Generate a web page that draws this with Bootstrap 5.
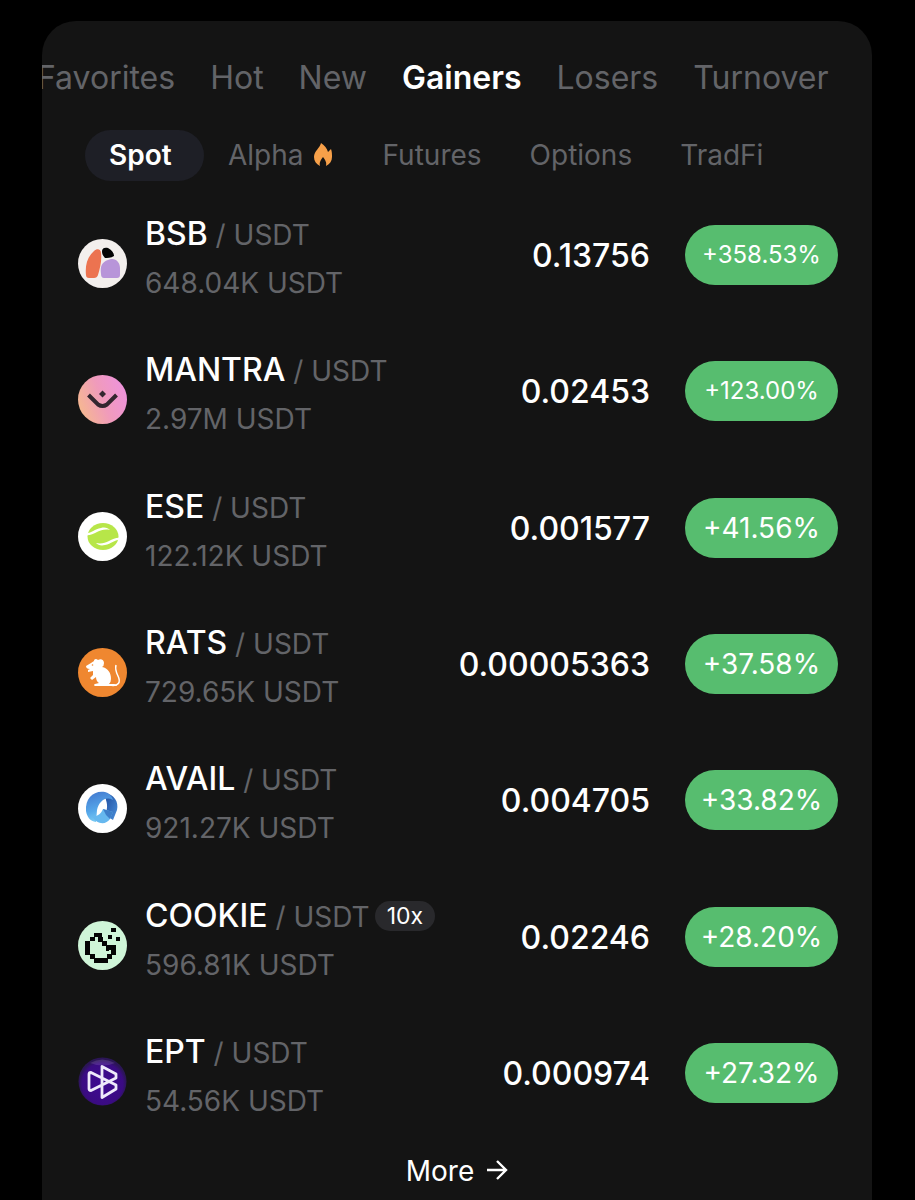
<!DOCTYPE html>
<html lang="en" data-bs-theme="dark">
<head>
<meta charset="utf-8">
<meta name="viewport" content="width=device-width, initial-scale=1">
<title>Markets – Gainers</title>
<link href="https://cdn.jsdelivr.net/npm/bootstrap@5.3.0/dist/css/bootstrap.min.css" rel="stylesheet">
<style>
  body { background: #000; color: #fff; font-family: Inter, "Liberation Sans", sans-serif; overflow-x: hidden; }
  .page { padding: 21px 43px 0 42px; }
  .panel { background: #141414; border-radius: 34px 34px 0 0; min-height: calc(100vh - 21px); overflow: hidden; }
  .market-tabs { gap: 35px; padding-top: 33px; margin-left: -5px; font-size: 32px; line-height: 48px; }
  .market-tabs button, .kind-tabs button { background: none; border: 0; padding: 0; color: #636468; font-weight: 400; white-space: nowrap; }
  .market-tabs button.active { color: #fff; font-weight: 600; }
  .kind-tabs { margin: 28px 0 0 43px; font-size: 28px; line-height: 51px; }
  .kind-tabs button { padding: 0 24px; border-radius: 26px; }
  .kind-tabs button.active { background: #1e1f26; color: #fff; font-weight: 600; min-width: 119px; text-align: left; }
  .flame { margin-left: 8px; }
  .pairs { width: 100%; height: 954px; margin-top: 6px; }
  .pairs td, .pairs th { padding: 0; vertical-align: middle; font-weight: 400; }
  .pairs th:first-child { padding: 7px 0 0 36px; }
  .pairs td:last-child { width: 222px; padding: 0 34px 0 35px; }
  .coin { width: 49px; height: 49px; margin-top: 10px; margin-right: 18px; }
  .pair-line { line-height: 48px; white-space: nowrap; color: #636468; font-size: 28px; }
  .ticker { color: #fff; font-size: 32px; font-weight: 500; }
  .pairs td.price { font-size: 32px; font-weight: 500; text-align: right; padding-top: 2px; }
  .change { display: block; width: 153px; height: 60px; line-height: 60px; border: 0; padding: 0; border-radius: 30px; background: #57bd6f; color: #fff; font-size: 28px; text-align: center; }
  .change-long { font-size: 24px; }
  .lever { display: inline-block; background: #29292c; color: #fff; border-radius: 15px; padding: 0 12px; font-size: 23px; line-height: 30px; margin-left: 5px; vertical-align: 3px; }
  .more { color: #fff; font-size: 28px; line-height: 42px; margin-top: 9px; text-decoration: none; gap: 13px; }
</style>
<script src="https://cdn.jsdelivr.net/npm/bootstrap@5.3.0/dist/js/bootstrap.bundle.min.js"></script>
</head>
<body>
<main class="page">
  <section class="panel">
    <nav class="market-tabs d-flex" aria-label="Market lists">
      <button type="button">Favorites</button>
      <button type="button">Hot</button>
      <button type="button">New</button>
      <button type="button" class="active">Gainers</button>
      <button type="button">Losers</button>
      <button type="button">Turnover</button>
    </nav>
    <nav class="kind-tabs d-flex" aria-label="Market types">
      <button type="button" class="active">Spot</button>
      <button type="button" class="d-flex align-items-center">Alpha
        <svg class="flame" width="23" height="26" viewBox="2 1 23 26" aria-hidden="true"><path fill="#f7a049" d="M11 1C10 6 4 9 4 15c0 4 2 7 6 9-1-4 1-6 3-9 2 3 4 5 3 9 4-2 6-5 6-9 0-3 0-5-1-8l-3 3C17 6 14 3 11 1Z"/></svg>
      </button>
      <button type="button">Futures</button>
      <button type="button">Options</button>
      <button type="button">TradFi</button>
    </nav>
    <table class="pairs" aria-label="Top gainers">
      <tbody>
        <tr>
          <th scope="row"><div class="d-flex align-items-center">
            <svg class="coin" viewBox="0 0 49 49" aria-hidden="true"><circle cx="24.500" cy="24.500" r="24.500" fill="#f3efed"/><path fill="#ec7350" d="M8 36c-1-9 1-18 8-24 3-3 7-2 7 2 1 8-1 15-3 22q-1 3-4 3h-5q-3 0-3-3Z"/><path fill="#050505" d="M24 12c0-3 3-4 6-3 4 2 6 5 6 8-3 2-7 2-9 2-2-2-3-4-3-7Z"/><path fill="#b895d9" d="M23 35c-1-8 1-12 7-14 7-3 12 2 12 8v7q0 3-3 3H26q-3 0-3-4Z"/></svg>
            <div><div class="pair-line"><span class="ticker">BSB</span> / USDT</div><div class="pair-line">648.04K USDT</div></div>
          </div></th>
          <td class="price">0.13756</td>
          <td><button type="button" class="change change-long">+358.53%</button></td>
        </tr>
        <tr>
          <th scope="row"><div class="d-flex align-items-center">
            <svg class="coin" viewBox="0 0 49 49" aria-hidden="true"><defs><linearGradient id="mantra" x1="0" y1="0.700" x2="1" y2="0.300"><stop offset="0" stop-color="#f6b98f"/><stop offset="0.500" stop-color="#f09bbb"/><stop offset="1" stop-color="#ee92dd"/></linearGradient></defs><circle cx="24.500" cy="24.500" r="24.500" fill="url(#mantra)"/><path d="M10.500 20 20 29.500q4.500 3 9 0L38.500 20" fill="none" stroke="#33262f" stroke-width="4"/><path fill="#33262f" d="m24.500 15.500 3.500 3.500-3.500 3.500-3.500-3.500Z"/></svg>
            <div><div class="pair-line"><span class="ticker">MANTRA</span> / USDT</div><div class="pair-line">2.97M USDT</div></div>
          </div></th>
          <td class="price">0.02453</td>
          <td><button type="button" class="change change-long">+123.00%</button></td>
        </tr>
        <tr>
          <th scope="row"><div class="d-flex align-items-center">
            <svg class="coin" viewBox="0 0 49 49" aria-hidden="true"><circle cx="24.500" cy="24.500" r="24.500" fill="#fff"/><ellipse cx="25" cy="24.500" rx="15.500" ry="13.500" fill="#b7e649"/><path fill="#fff" d="M7 21c6 1 9-4 16-5 4-1 7 0 9 2-5-1-9 0-13 2-4 2-8 4-12 3ZM43 28c-6-1-9 4-16 5-4 1-7 0-9-2 5 1 9 0 13-2 4-2 8-4 12-3Z"/></svg>
            <div><div class="pair-line"><span class="ticker">ESE</span> / USDT</div><div class="pair-line">122.12K USDT</div></div>
          </div></th>
          <td class="price">0.001577</td>
          <td><button type="button" class="change">+41.56%</button></td>
        </tr>
        <tr>
          <th scope="row"><div class="d-flex align-items-center">
            <svg class="coin" viewBox="0 0 49 49" aria-hidden="true"><circle cx="24.500" cy="24.500" r="24.500" fill="#ef8730"/><path fill="#fff" d="m8 18 5-3 3-2c0-2 2-3 4-1 3-2 6 0 6 3q0 3-2 4c6 1 9 6 9 12q0 3-2 5h5q2 0 3 2H17q-2-1 0-2l4-1c-2-1-3-4-3-6l-4 3-2-2 3-3v-4l-5 1v-2l2-1q-4 0-4-3Z"/><path d="M31 37c10 2 12-3 9-9-2-4-3-7-2-11" fill="none" stroke="#fff" stroke-width="1.500"/><circle cx="14.500" cy="17" r="0.800" fill="#ef8730"/></svg>
            <div><div class="pair-line"><span class="ticker">RATS</span> / USDT</div><div class="pair-line">729.65K USDT</div></div>
          </div></th>
          <td class="price">0.00005363</td>
          <td><button type="button" class="change">+37.58%</button></td>
        </tr>
        <tr>
          <th scope="row"><div class="d-flex align-items-center">
            <svg class="coin" viewBox="0 0 49 49" aria-hidden="true"><defs><linearGradient id="availRing" x1="0.200" y1="0" x2="0.500" y2="1"><stop offset="0" stop-color="#4379cf"/><stop offset="0.600" stop-color="#56a8ea"/><stop offset="1" stop-color="#7fd0f4"/></linearGradient><linearGradient id="availTail" x1="0" y1="0" x2="1" y2="1"><stop offset="0" stop-color="#1f4b9c"/><stop offset="1" stop-color="#4b91dc"/></linearGradient></defs><circle cx="24.500" cy="24.500" r="24.500" fill="#fff"/><path fill="url(#availTail)" d="M27 9c9 1 14 9 12 17l-4 10-8-5c2-5 3-9 1-15Z"/><path fill="url(#availRing)" d="M8 27C7 14 16 6 27 8c4 1 7 4 8 8-7-4-14 1-16 10l-1 12C12 37 9 33 8 27Z"/><path fill="#66b8ef" d="M14 32c5 1 9-2 11-7l10 3-3 7c-4 6-13 6-18-3Z"/><path fill="#3e7fc9" d="m25 25 10 3-3 7-4-4Z"/></svg>
            <div><div class="pair-line"><span class="ticker">AVAIL</span> / USDT</div><div class="pair-line">921.27K USDT</div></div>
          </div></th>
          <td class="price">0.004705</td>
          <td><button type="button" class="change">+33.82%</button></td>
        </tr>
        <tr>
          <th scope="row"><div class="d-flex align-items-center">
            <svg class="coin" viewBox="0 0 49 49" aria-hidden="true"><circle cx="24.500" cy="24.500" r="24.500" fill="#cff5d8"/><path fill="#050505" d="M16 12h8v4h-8zM12 16h5v4h-5zM20 16h5v5h-5zM7 20h5v14H7zM24 20h5v5h-5zM28 24h10v5H28zM33 28h5v6h-5zM28 28h3v2h-3zM12 33h5v5h-5zM29 33h5v5h-5zM16 37h14v5H16zM33 7h5v4h-5zM30 14h4v4h-4zM38 16h4v4h-4z"/></svg>
            <div><div class="pair-line"><span class="ticker">COOKIE</span> / USDT<span class="lever">10x</span></div><div class="pair-line">596.81K USDT</div></div>
          </div></th>
          <td class="price">0.02246</td>
          <td><button type="button" class="change">+28.20%</button></td>
        </tr>
        <tr>
          <th scope="row"><div class="d-flex align-items-center">
            <svg class="coin" viewBox="0 0 49 49" aria-hidden="true"><defs><radialGradient id="ept" cx="0.500" cy="0.550" r="0.500"><stop offset="0" stop-color="#3f0a93"/><stop offset="0.850" stop-color="#3a0b82"/><stop offset="1" stop-color="#2b1556"/></radialGradient></defs><circle cx="24.500" cy="24.500" r="24" fill="url(#ept)"/><path d="M12 6Q24-1 37 6q-12 5-25 0Z" fill="#9b7bc4" opacity="0.250"/><path d="M24 9.500v31L38 32v-4L13 15.500q-2 0-2 2v14q0 2 2 2L38 21v-4L24 9.500Z" fill="none" stroke="#eee9fa" stroke-width="2.800" stroke-linejoin="round"/></svg>
            <div><div class="pair-line"><span class="ticker">EPT</span> / USDT</div><div class="pair-line">54.56K USDT</div></div>
          </div></th>
          <td class="price">0.000974</td>
          <td><button type="button" class="change">+27.32%</button></td>
        </tr>
      </tbody>
    </table>
    <div class="d-flex justify-content-center">
      <a href="#" class="more d-flex align-items-center">More
        <svg width="21" height="22" viewBox="0 -1 21 22" fill="none" stroke="#fff" stroke-width="2.400" aria-hidden="true"><path d="M0 9h19M10 0l9 9-9 9"/></svg>
      </a>
    </div>
  </section>
</main>
</body>
</html>
